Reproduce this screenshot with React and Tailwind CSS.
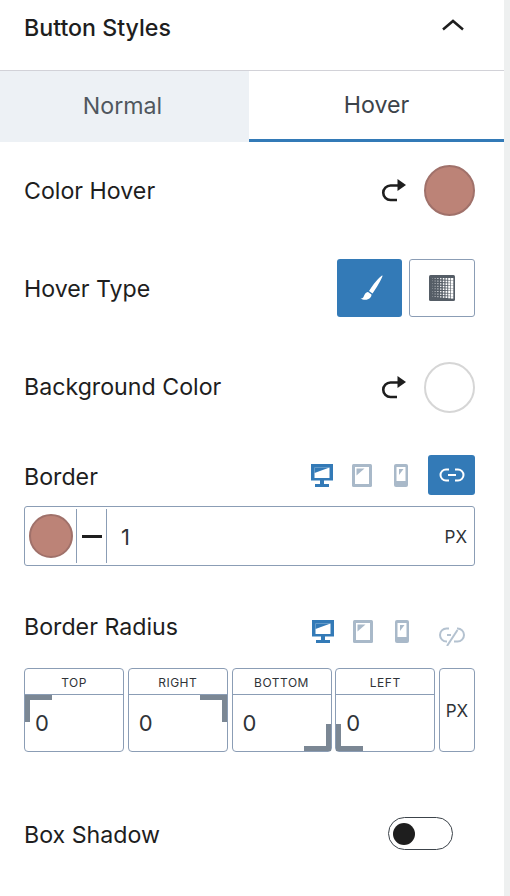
import React from 'react'

const blue = '#337ab7'

function ResetIcon() {
  return (
    <svg width="26" height="24" viewBox="0 0 26 24" fill="none">
      <path d="M17 6.500H9.500a7.250 7.250 0 0 0 0 14.500H16" stroke="#1e1e1e" strokeWidth="2.600" />
      <path d="M16.500 0 25 6 16.500 12z" fill="#1e1e1e" />
    </svg>
  )
}

function Swatch({ size = 'w-[51px] h-[51px]', empty }) {
  return empty ? (
    <div className={`${size} rounded-full border-2 border-[#d6d6d6] bg-white`} />
  ) : (
    <div className={`${size} rounded-full border-2 border-[#a0716a] bg-[#bc8377]`} />
  )
}

function DeviceIcons() {
  return (
    <div className="flex items-center gap-[19px]">
      <svg width="22" height="23" viewBox="0 0 22 23">
        <path d="M0 0h22v16.500H0z" fill={blue} />
        <path d="M3.500 3.500h15V14h-15z" fill="#fff" />
        <path d="M3.500 3.500h15L3.500 9z" fill={blue} />
        <path d="M9 16h4v4h5v3H4v-3h5z" fill={blue} />
      </svg>
      <svg width="20" height="23" viewBox="0 0 20 23">
        <rect width="20" height="23" rx="1.500" fill="#a9b9c9" />
        <path d="M3 3h14v17H3z" fill="#fff" />
        <path d="M4.500 4.500h8l-8 7z" fill="#a9b9c9" />
      </svg>
      <svg width="14" height="23" viewBox="0 0 14 23" className="mx-[3px]">
        <rect width="14" height="23" rx="2" fill="#a9b9c9" />
        <path d="M2.500 3h9v14h-9z" fill="#fff" />
        <path d="M5 5h4.500L5 11z" fill="#a9b9c9" />
      </svg>
    </div>
  )
}

function LinkGlyph({ color }) {
  return (
    <svg width="26" height="14" viewBox="0 0 26 14" fill="none" stroke={color} strokeWidth="2">
      <path d="M10 1.500H7a5.500 5.500 0 0 0 0 11h3" />
      <path d="M16 1.500h3a5.500 5.500 0 0 1 0 11h-3" />
      <path d="M9 7h8" />
    </svg>
  )
}

function UnlinkGlyph() {
  return (
    <svg width="26" height="30" viewBox="0 0 26 30" fill="none" stroke="#b4c2d0" strokeWidth="2">
      <path d="M10 12.500H7.500a6.500 6.500 0 0 0 0 13H8" />
      <path d="M18 12.500h.5a6.500 6.500 0 0 1 0 13H15" />
      <path d="M8 19h4" />
      <path d="M18.500 14 8 30" />
    </svg>
  )
}

function GradientIcon() {
  // halftone squares get bigger towards the right of the swatch
  const cols = [0.5, 0.8, 1, 1.3, 1.6, 1.8, 2.1, 2.4]
  const rows = [3, 5.600, 8.200, 10.800, 13.400, 16, 18.600, 21.200]
  return (
    <svg width="26" height="26" viewBox="0 0 26 26">
      <rect width="26" height="26" rx="1.500" fill="#555d66" />
      {cols.map((s, i) =>
        rows.map(y => (
          <rect key={`${i}-${y}`} x={3 + i * 2.700} y={y} width={s} height={s} fill="#fff" />
        ))
      )}
    </svg>
  )
}

function Corner({ side }) {
  const spots = {
    top: 'left-0 top-0 border-l-[5px] border-t-[5px]',
    right: 'right-0 top-0 border-r-[5px] border-t-[5px]',
    bottom: 'right-0 bottom-0 border-r-[5px] border-b-[5px]',
    left: 'left-0 bottom-0 border-l-[5px] border-b-[5px]',
  }
  return <span className={`absolute h-[27px] w-[27px] border-[#7b8794] ${spots[side]}`} />
}

function RadiusBox({ label, side }) {
  return (
    <div className="flex h-[84px] w-[100px] flex-col rounded-[4px] border border-[#8b9db5]">
      <div className="flex h-[26px] items-center justify-center border-b border-[#8b9db5] pt-[2px] text-[12px] tracking-[0.5px] text-[#2f3338]">
        {label}
      </div>
      <div className="relative flex flex-1 items-center pl-[10px] text-[22px] text-[#2f3338]">
        <Corner side={side} />
        <span className="relative">0</span>
      </div>
    </div>
  )
}

export default function App() {
  return (
    <div className="flex h-[896px] w-[510px] overflow-hidden bg-white font-['Inter','Noto_Sans',sans-serif] text-[23.2px] text-[#1e1e1e]">
      <div className="w-[504px]">
        <div className="flex h-[71px] items-start justify-between border-b border-[#d2d2d8] pl-6 pr-[39px] pt-[14px]">
          <h2 className="text-[23.2px] font-medium leading-[28px]">Button Styles</h2>
          <svg width="24" height="14" viewBox="0 0 24 14" fill="none" className="mt-[4px]">
            <path d="M2 11.500 12 3l10 8.500" stroke="#1e1e1e" strokeWidth="2.500" />
          </svg>
        </div>

        <div className="flex h-[71px]">
          <div className="flex w-[249px] items-center justify-center bg-[#edf1f5] pr-[4px] text-[#50575e]">Normal</div>
          <div className="flex flex-1 items-center justify-center border-b-[3px] border-[#337ab7] text-[#3c434a]">Hover</div>
        </div>

        <div className="mt-[23px] flex h-[51px] items-center justify-between pl-6 pr-[29px]">
          <span className="pt-[2px]">Color Hover</span>
          <div className="flex items-center gap-[17px]">
            <ResetIcon />
            <Swatch />
          </div>
        </div>

        <div className="mt-[43px] flex h-[58px] items-center justify-between pl-6 pr-[29px]">
          <span className="pt-[2px]">Hover Type</span>
          <div className="flex gap-[7px]">
            <div className="flex h-[58px] w-[65px] items-center justify-center rounded-[3px] bg-[#337ab7]">
              <svg width="28" height="28" viewBox="0 0 28 28" fill="#fff">
                <path d="M26.500 1.500c-1-.6-8 7-11.500 12.500l-2 3 3.500 2.500 2-3c3.500-5 8.500-14 8-15z" />
                <path d="M12 18c-3 .5-3.500 3-4.500 5-.5 1-2 1.500-3 1.500 2.500 1.500 7 2 9.500-.5 1.300-1.300 1.500-2.500 1.500-3.500z" />
              </svg>
            </div>
            <div className="flex h-[58px] w-[66px] items-center justify-center rounded-[3px] border border-[#8b9db5]">
              <GradientIcon />
            </div>
          </div>
        </div>

        <div className="mt-[45px] flex h-[51px] items-center justify-between pl-6 pr-[29px]">
          <span>Background Color</span>
          <div className="flex items-center gap-[17px]">
            <ResetIcon />
            <Swatch empty />
          </div>
        </div>

        <div className="mt-[42px] flex h-[40px] items-center justify-between pl-6 pr-[29px]">
          <span className="pt-[4px]">Border</span>
          <div className="flex items-center gap-[17px]">
            <DeviceIcons />
            <div className="flex h-[40px] w-[47px] items-center justify-center rounded-[3px] bg-[#337ab7]">
              <LinkGlyph color="#fff" />
            </div>
          </div>
        </div>

        <div className="ml-6 mt-[11px] flex h-[60px] w-[451px] items-center rounded-[3px] border border-[#8b9db5]">
          <div className="flex h-[54px] w-[52px] items-center justify-center border-r border-[#8b9db5]">
            <Swatch size="w-[44px] h-[44px]" />
          </div>
          <div className="flex h-[54px] w-[30px] items-center justify-center border-r border-[#8b9db5]">
            <span className="h-[3px] w-[20px] bg-[#1e1e1e]" />
          </div>
          <span className="flex-1 pl-[14px] pt-[2px] text-[22px] text-[#2f3338]">1</span>
          <span className="pr-[7px] pt-[4px] text-[17px] text-[#2f3338]">PX</span>
        </div>

        <div className="mt-[44px] flex h-[34px] items-center justify-between pl-6 pr-[39px]">
          <span>Border Radius</span>
          <div className="flex items-center gap-[27px] pt-[8px]">
            <DeviceIcons />
            <UnlinkGlyph />
          </div>
        </div>

        <div className="ml-6 mt-[24px] flex w-[451px] justify-between">
          <RadiusBox label="TOP" side="top" />
          <RadiusBox label="RIGHT" side="right" />
          <RadiusBox label="BOTTOM" side="bottom" />
          <RadiusBox label="LEFT" side="left" />
          <div className="flex h-[84px] w-[36px] items-center justify-center rounded-[4px] border border-[#8b9db5] pt-[4px] text-[17px] text-[#2f3338]">
            PX
          </div>
        </div>

        <div className="mt-[65px] flex h-[33px] items-center justify-between pl-6 pr-[51px]">
          <span className="pt-[4px]">Box Shadow</span>
          <div className="flex h-[33px] w-[65px] items-center rounded-full border border-[#3c434a] pl-[4px]">
            <span className="h-[22px] w-[22px] rounded-full bg-[#1e1e1e]" />
          </div>
        </div>
      </div>
      <div className="w-[6px] bg-[#eef0f0]" />
    </div>
  )
}
